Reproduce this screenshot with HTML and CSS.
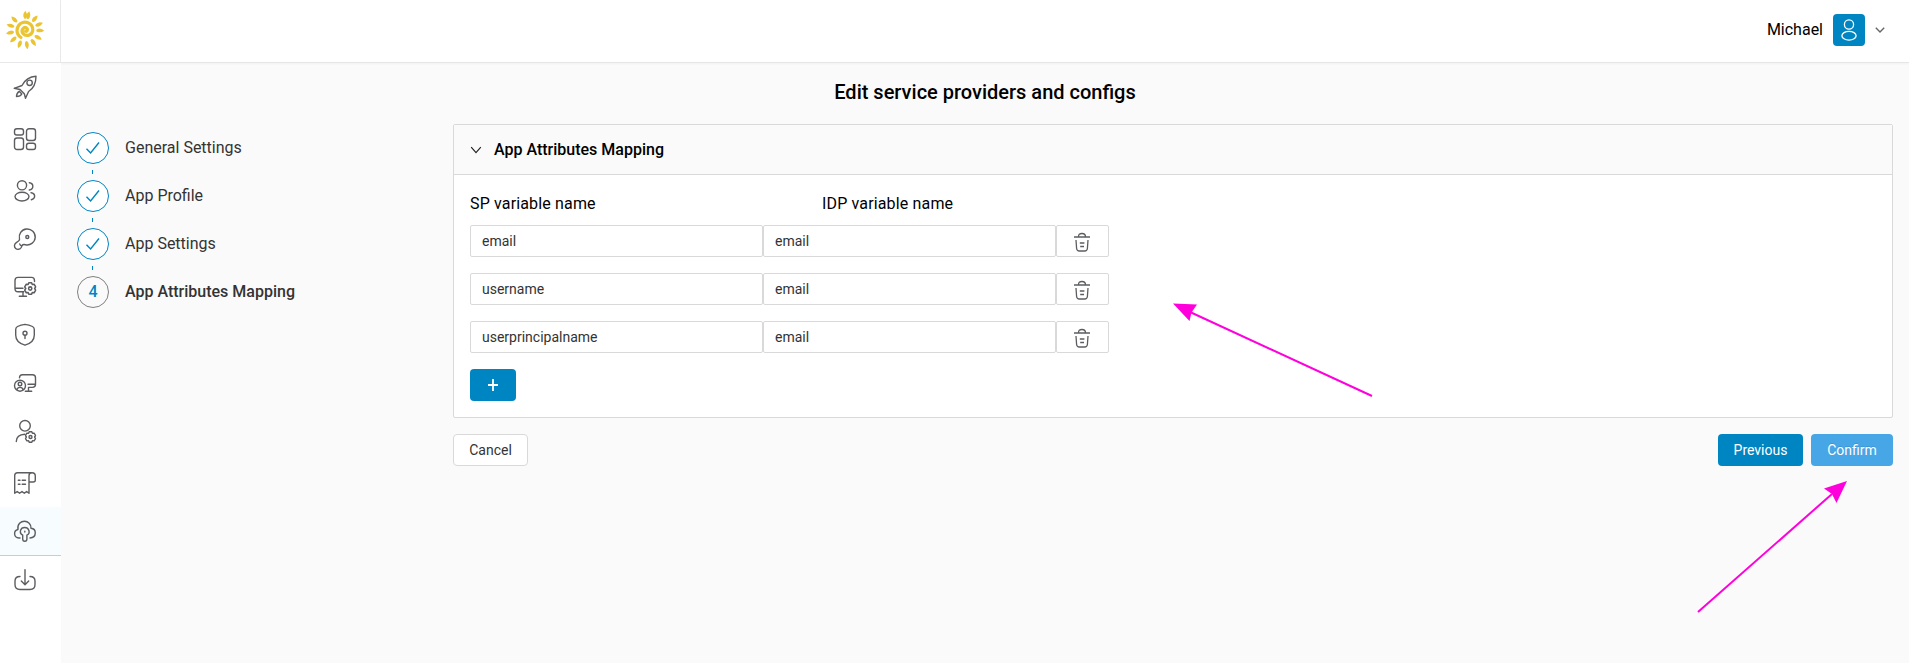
FILE: index.html
```html
<!DOCTYPE html>
<html lang="en">
<head>
<meta charset="utf-8">
<title>Edit service providers and configs</title>
<link rel="stylesheet" href="styles.css">
</head>
<body>
<svg class="defs" aria-hidden="true">
  <symbol id="gear" viewBox="0 0 12 12">
    <path d="M4.700.7h2.600l.6 1.600 1.700-.2 1.500 2.400L10.100 6l1 1.500-1.500 2.400L7.900 9.700l-.6 1.600H4.700L4.100 9.700l-1.700.2L.9 7.500 1.900 6 .9 4.500l1.500-2.400 1.700.2z"/>
    <circle cx="6" cy="6" r="1.500"/>
  </symbol>
  <symbol id="trash" viewBox="0 0 18 20">
    <path d="M1 5h16M5.500 4.700C5.500 2.500 6.500 1.500 9 1.500s3.500 1 3.500 3.200M3 8l.6 8.500q.3 2.500 2.700 2.500h5.400q2.400 0 2.700-2.500L15 8M6.800 11h4.600M7.200 14.500h3.800"/>
  </symbol>
  <symbol id="check" viewBox="0 0 16 14">
    <path d="M1.500 7.800 5.600 12 14 1.500"/>
  </symbol>
</svg>
<div class="app">
  <aside class="sidebar">
    <div class="logo">
      <svg width="40" height="40" viewBox="-20 -20 40 40">
        <g class="rays">
          <path id="ray" d="M-.7-11.600Q-3.200-15 .3-19.300Q3.400-15 1.200-11.600Q.2-10.800-.7-11.600z"/>
          <use href="#ray" transform="rotate(12)"/><use href="#ray" transform="rotate(40)"/>
          <use href="#ray" transform="rotate(67)"/><use href="#ray" transform="rotate(91)"/>
          <use href="#ray" transform="rotate(119)"/><use href="#ray" transform="rotate(145)"/>
          <use href="#ray" transform="rotate(172)"/><use href="#ray" transform="rotate(200)"/>
          <use href="#ray" transform="rotate(230)"/><use href="#ray" transform="rotate(259)"/>
          <use href="#ray" transform="rotate(286)"/><use href="#ray" transform="rotate(314)"/>
        </g>
        <path class="spiral" d="M-4 7.500C-9.500 4-9 -3-4.500-6.500C1-10 8-6 7.800 0C7.500 5.500 1 7-2 3.500C-4.500 0-1-3.800 1.800-1.800C3.200-.5 2.200 1.600.6 1.300"/>
      </svg>
    </div>
    <nav class="menu">
      <a class="item"><svg class="icon" viewBox="0 0 24 24"><path d="M23 1.200C16 1.500 12 4.500 9 10.500L1.200 13.300 7 14.500 11.300 18.800 12.500 23.300 15.600 16.500C21 13 23 8 23 1.200zM6.200 16.300 8.800 19Q7.500 21.500 3.500 21.600 3.500 18 6.200 16.300z"/><circle cx="16.600" cy="7.800" r="2.700"/></svg></a>
      <a class="item spaced"><svg class="icon" viewBox="0 0 24 24"><rect x="1.500" y="1.700" width="9" height="6.300" rx="2.300"/><rect x="13.500" y="1.700" width="9" height="11.800" rx="2.500"/><rect x="1.500" y="11" width="9" height="11.500" rx="2.500"/><rect x="13.500" y="16.300" width="9" height="6.200" rx="2.300"/></svg></a>
      <a class="item spaced"><svg class="icon" viewBox="0 0 24 24"><circle cx="9" cy="6.300" r="4.600"/><ellipse cx="9" cy="17.600" rx="7" ry="4.400"/><path d="M16.300 3.700C21 4.300 21 10.300 16.300 11M18 13.700C22.800 14.500 22.800 19.700 18.300 20.700"/></svg></a>
      <a class="item"><svg class="icon" viewBox="0 0 24 24"><path d="M6.500 12A8 8 0 1 1 12.300 17.700Q9.800 17.200 9 18.700L8.200 20.500A3.600 3.600 0 1 1 3 15.800L5.500 14Q6.800 13 6.500 12zM6.700 17Q7 18.700 9 18.700"/><circle cx="14.300" cy="10" r="1.500"/></svg></a>
      <a class="item"><svg class="icon" viewBox="0 0 24 24"><path d="M21.500 6.500V5.500Q21.500 2.400 18.500 2.400H5Q2 2.400 2 5.500V13.500Q2 16.800 5 16.800H10.800M2 13.300H10M10 16.800V21.300M6.300 21.300H13.500"/><use href="#gear" x="10.700" y="7" width="13" height="13"/></svg></a>
      <a class="item"><svg class="icon" viewBox="0 0 24 24"><path d="M12 1.400Q16 1.700 19.500 3.500Q21.300 4.500 21.300 6.500V12Q21.300 19.500 12 22.200Q2.700 19.500 2.700 12V6.500Q2.700 4.500 4.500 3.500Q8 1.700 12 1.400zM12 12.300V15.600"/><circle cx="12" cy="10.200" r="2"/></svg></a>
      <a class="item"><svg class="icon" viewBox="0 0 24 24"><circle cx="7" cy="14.700" r="5.500"/><circle cx="7" cy="13" r="1.800"/><path d="M3.800 18.700Q4.500 16.400 7 16.400T10.200 18.700M6.500 6.800Q6.500 3.700 9.500 3.700H19.500Q22.500 3.700 22.500 6.700V13.300Q22.500 16.400 19.500 16.400H15.500V20.300M15 13.300H22.500M12.300 20.300H18.700"/></svg></a>
      <a class="item"><svg class="icon" viewBox="0 0 24 24"><circle cx="12" cy="6.800" r="5.300"/><path d="M3.300 22.500Q3.500 15.700 11.800 15.300"/><use href="#gear" x="11.500" y="12" width="12" height="12"/></svg></a>
      <a class="item spaced"><svg class="icon" viewBox="0 0 24 24"><path d="M19 1.700H4.500Q1.700 1.700 1.700 4.500V22.300L4.200 20.500 6.600 22.300 9 20.500 11.300 22.300 13.600 20.500 16 22.300V4.700Q16 1.700 19 1.700Q22.300 1.700 22.300 5V9Q22.300 11 20.300 11H16M5.300 9.300H7M9.200 9.300H12.500M5.300 13.300H7M9.200 13.300H12.500"/></svg></a>
      <a class="item active"><svg class="icon" viewBox="0 0 24 24"><path d="M7 19H6C.5 18.700.200 11.500 5 10.500C4 5 8 2.300 11.500 2.300C15 2.300 18.300 5 18 9.300C23.700 9.800 24 18.500 17 19M9.700 16.200C5.500 13.700 7.500 8.500 11.700 8.500S18 13.700 13.900 16.200V20Q13.900 22.300 11.800 22.300T9.700 20zM11.800 12.300V13"/></svg></a>
      <a class="item"><svg class="icon" viewBox="0 0 24 24"><path d="M7 8.500Q2 8.500 2 13V16.500Q2 21.500 7 21.500H17Q22 21.500 22 16.500V13Q22 8.500 17 8.500M12 1.800V16.500M8.300 13 12 16.700 15.700 13"/></svg></a>
    </nav>
  </aside>
  <div class="page">
    <header class="topbar">
      <span class="user-name">Michael</span>
      <span class="avatar"><svg width="20" height="24" viewBox="0 0 20 24"><circle cx="10" cy="6.500" r="4.600"/><ellipse cx="10" cy="17.700" rx="7.100" ry="4.400"/></svg></span>
      <svg class="caret" width="10" height="6" viewBox="0 0 10 6"><path d="M.8.7 5 4.900 9.200.7"/></svg>
    </header>
    <main class="content">
      <h1 class="title">Edit service providers and configs</h1>
      <div class="columns">
        <ol class="steps">
          <li class="step"><span class="bullet"><svg width="16" height="14"><use href="#check"/></svg></span><span>General Settings</span></li>
          <li class="step"><span class="bullet"><svg width="16" height="14"><use href="#check"/></svg></span><span>App Profile</span></li>
          <li class="step"><span class="bullet"><svg width="16" height="14"><use href="#check"/></svg></span><span>App Settings</span></li>
          <li class="step current"><span class="bullet">4</span><span>App Attributes Mapping</span></li>
        </ol>
        <div class="form">
          <section class="panel">
            <div class="panel-head"><svg class="collapse" width="12" height="8" viewBox="0 0 12 8"><path d="M1.200 1.200 6 6.600 10.800 1.200"/></svg>App Attributes Mapping</div>
            <div class="panel-body">
              <div class="labels"><span>SP variable name</span><span>IDP variable name</span></div>
              <div class="row"><div class="field">email</div><div class="field">email</div><div class="delete"><svg width="18" height="20"><use href="#trash"/></svg></div></div>
              <div class="row"><div class="field">username</div><div class="field">email</div><div class="delete"><svg width="18" height="20"><use href="#trash"/></svg></div></div>
              <div class="row"><div class="field">userprincipalname</div><div class="field">email</div><div class="delete"><svg width="18" height="20"><use href="#trash"/></svg></div></div>
              <button class="btn primary add" aria-label="Add"><svg width="12" height="12" viewBox="0 0 12 12"><path d="M1 6H11M6 0V12"/></svg></button>
            </div>
          </section>
          <div class="actions">
            <button class="btn cancel">Cancel</button>
            <button class="btn primary previous">Previous</button>
            <button class="btn primary confirm">Confirm</button>
          </div>
        </div>
      </div>
    </main>
  </div>
</div>
<svg class="pointers" width="1909" height="663" viewBox="0 0 1909 663">
  <path class="shaft" d="M1372 396 1190 312M1698 612 1832 494"/>
  <path class="head" d="M1173 303.500 1197 304.500 1191.500 312.500 1189.500 321zM1847 481 1824 488.500 1832 494 1836.500 503z"/>
</svg>
</body>
</html>
```
FILE: styles.css
```css
* { box-sizing: border-box; }
body { margin: 0; background: #fafafa; color: #000; font: 16px/24px Roboto, sans-serif; overflow: hidden; }
svg { display: block; fill: none; }
.defs { display: none; }
.app { display: flex; height: 663px; }
.sidebar { width: 61px; flex: none; background: #fff; }
.logo { height: 63px; padding: 10px 0 0 5px; border-right: 1px solid #ececec; border-bottom: 1px solid #e8e8e8; }
.rays { fill: #ebc531; }
#ray { transform-origin: 0 0; }
.spiral { stroke: #ebc531; stroke-width: 3.2; stroke-linecap: round; }
.menu { display: flex; flex-direction: column; }
.item { height: 48px; padding: 12px 13px; }
.item.spaced { margin-top: 4px; }
.item.active { height: 49px; background: #f7fcff; border-bottom: 1px solid #c5ced8; }
.icon { width: 24px; height: 24px; stroke: #5c5d60; stroke-width: 1.4; stroke-linecap: round; stroke-linejoin: round; }
.page { flex: 1; min-width: 0; }
.topbar { height: 63px; display: flex; align-items: center; justify-content: flex-end; padding: 0 24px 3px 0; background: #fff; border-bottom: 1px solid #e6e6e6; box-shadow: 0 1px 2px rgba(0, 0, 0, .04); }
.avatar { display: grid; place-items: center; width: 32px; height: 32px; margin: 0 10px; border-radius: 4px; background: #0085c3; }
.avatar svg { stroke: #fff; stroke-width: 1.3; }
.caret { stroke: #666; stroke-width: 1.4; }
.content { padding: 13px 16px 0; }
.title { margin: 0; height: 48px; text-align: center; font-size: 20px; line-height: 32px; font-weight: 500; }
.columns { display: flex; }
.steps { width: 376px; flex: none; display: flex; flex-direction: column; gap: 16px; margin: 0; padding: 8px 0 0; list-style: none; color: #333; }
.step { position: relative; display: flex; align-items: center; gap: 16px; height: 32px; }
.step:not(:last-child)::after { content: ""; position: absolute; left: 15px; top: 38px; width: 1px; height: 4px; background: #0085c3; }
.bullet { display: grid; place-items: center; width: 32px; height: 32px; border: 1px solid #0085c3; border-radius: 50%; background: #fff; }
.bullet svg { stroke: #0085c3; stroke-width: 1.4; }
.current { font-weight: 500; }
.current .bullet { border-color: #808080; background: #fafafa; color: #0085c3; }
.form { flex: 1; }
.panel { height: 294px; border: 1px solid #d9d9d9; border-radius: 2px; background: #fff; }
.panel-head { display: flex; align-items: center; gap: 12px; height: 50px; padding-left: 16px; background: #fafafa; border-bottom: 1px solid #d9d9d9; font-weight: 500; }
.collapse { stroke: #222; stroke-width: 1.2; }
.panel-body { padding: 16px; }
.labels { display: flex; height: 34px; padding-top: 1px; letter-spacing: .15px; }
.labels span:first-child { width: 352px; }
.row { display: flex; height: 32px; margin-bottom: 16px; font-size: 14px; line-height: 30px; color: #333; }
.field { width: 293px; padding: 0 11px; border: 1px solid #d9d9d9; border-radius: 2px; }
.delete { width: 53px; padding: 6px 0 0 16px; border: 1px solid #d9d9d9; border-radius: 2px; }
.delete svg { stroke: #5c5d60; stroke-width: 1.3; }
.btn { height: 32px; padding: 0; border: 0; border-radius: 4px; font: 14px/30px Roboto, sans-serif; }
.primary { color: #fff; background: #0085c3; }
.add { display: grid; place-items: center; width: 46px; }
.add svg { stroke: #fff; stroke-width: 1.8; }
.actions { display: flex; gap: 8px; margin-top: 16px; }
.cancel { width: 75px; margin-right: auto; color: #333; background: #fff; border: 1px solid #d9d9d9; }
.previous { width: 85px; }
.confirm { width: 82px; background: #47a6e6; text-shadow: 0 -1px 0 rgba(0, 0, 0, .12); }
.pointers { position: absolute; left: 0; top: 0; pointer-events: none; }
.shaft { stroke: #ff00dc; stroke-width: 2; }
.head { fill: #ff00dc; }
```
